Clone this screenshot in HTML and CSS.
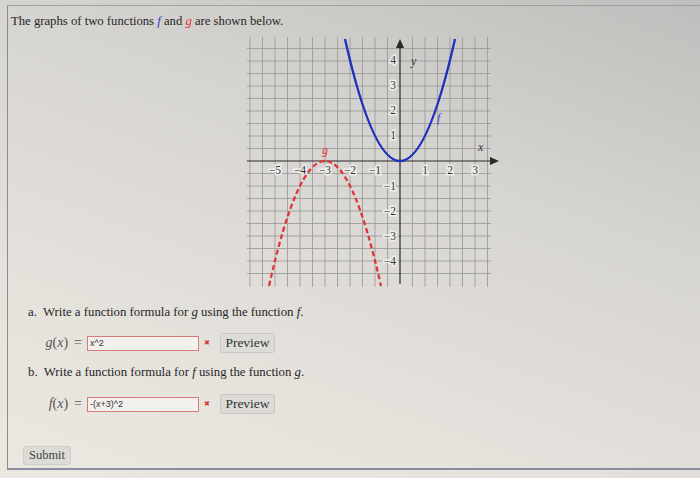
FILE: index.html
```html
<!DOCTYPE html>
<html>
<head>
<meta charset="utf-8">
<link rel="stylesheet" href="styles.css">
</head>
<body>
<div class="frame">
  <p class="intro">The graphs of two functions <i class="mf">f</i> and <i class="mg">g</i> are shown below.</p>
  <div class="graph">
    <svg width="260" height="256" viewBox="0 0 260 256" xmlns="http://www.w3.org/2000/svg">
      <g stroke="#999" stroke-width="0.85">
        <path d="M5 2V252M17.5 2V252M30 2V252M42.5 2V252M55 2V252M67.5 2V252M80 2V252M92.5 2V252M105 2V252M117.5 2V252M130 2V252M142.5 2V252M167.5 2V252M180 2V252M192.5 2V252M205 2V252M217.5 2V252M230 2V252M242.5 2V252"/>
        <path d="M2 13.5H246M2 26H246M2 38.5H246M2 51H246M2 63.5H246M2 76H246M2 88.5H246M2 101H246M2 113.5H246M2 138.5H246M2 151H246M2 163.5H246M2 176H246M2 188.5H246M2 201H246M2 213.5H246M2 226H246M2 238.5H246"/>
      </g>
      <g stroke="#2a2a2a" stroke-width="1.2" fill="#2a2a2a">
        <path d="M2 126H248"/>
        <path d="M155 249V12"/>
        <path d="M254 126L245 122L245 130Z" stroke="none"/>
        <path d="M155 4L151 13L159 13Z" stroke="none"/>
      </g>
      <g font-family="Liberation Serif, serif" font-size="11.5" fill="#333" stroke="#efeeec" stroke-width="3" paint-order="stroke" text-anchor="middle">
        <text x="30" y="139">−5</text>
        <text x="55" y="139">−4</text>
        <text x="80" y="139">−3</text>
        <text x="105" y="139">−2</text>
        <text x="130" y="139">−1</text>
        <text x="180" y="139">1</text>
        <text x="205" y="139">2</text>
        <text x="230" y="139">3</text>
      </g>
      <g font-family="Liberation Serif, serif" font-size="11.5" fill="#333" stroke="#efeeec" stroke-width="3" paint-order="stroke" text-anchor="end">
        <text x="151" y="29">4</text>
        <text x="151" y="54">3</text>
        <text x="151" y="79">2</text>
        <text x="151" y="104">1</text>
        <text x="151" y="155">−1</text>
        <text x="151" y="180">−2</text>
        <text x="151" y="205">−3</text>
        <text x="151" y="230">−4</text>
      </g>
      <path d="M100 4Q155 248 210 4" fill="none" stroke="#1d2fbf" stroke-width="2.3"/>
      <path d="M24 251Q80 1 136 251" fill="none" stroke="#e0333a" stroke-width="2.3" stroke-dasharray="5 3"/>
      <g font-family="Liberation Serif, serif" font-style="italic" font-size="12">
        <text x="166" y="30" fill="#333">y</text>
        <text x="233" y="116" fill="#333">x</text>
        <text x="192" y="87" fill="#3344bb">f</text>
        <text x="77" y="119" fill="#e0333a">g</text>
      </g>
    </svg>
  </div>
  <p class="part part-a">a.&nbsp; Write a function formula for <i>g</i> using the function <i>f</i>.</p>
  <div class="answer row-a">
    <span class="lbl"><i>g</i>(<i>x</i>)<span class="eq">=</span></span>
    <span class="inp">x^2</span>
    <span class="bad">✖</span>
    <span class="btn">Preview</span>
  </div>
  <p class="part part-b">b.&nbsp; Write a function formula for <i>f</i> using the function <i>g</i>.</p>
  <div class="answer row-b">
    <span class="lbl"><i>f</i>(<i>x</i>)<span class="eq">=</span></span>
    <span class="inp">-(x+3)^2</span>
    <span class="bad">✖</span>
    <span class="btn">Preview</span>
  </div>
  <div class="submit-row"><span class="submit">Submit</span></div>
</div>
</body>
</html>
```
FILE: styles.css
```css
html, body {
  margin: 0;
  padding: 0;
  width: 700px;
  height: 478px;
  overflow: hidden;
}
body {
  background: linear-gradient(200deg, #c0bebc 0%, #d6d4d1 35%, #e6e3dd 75%, #ebe8e2 100%);
  font-family: "Liberation Serif", serif;
  color: #262626;
}
.frame {
  margin: 5px 0 0 7px;
  width: 693px;
  height: 465px;
  border-left: 1px solid #8c8c8e;
  border-top: 1px solid #a2a1a0;
  border-bottom: 2px solid #8a8c9c;
  box-sizing: border-box;
  display: flex;
  flex-direction: column;
}
p { margin: 0; }
.intro {
  margin-top: 7px;
  padding-left: 3px;
  font-size: 12.7px;
  line-height: 16px;
}
.mf { color: #2a3cc0; }
.mg { color: #e0333a; }
.graph {
  margin-top: 6px;
  margin-left: 237px;
  height: 256px;
}
.graph svg { display: block; }
.part {
  padding-left: 20px;
  font-size: 12.8px;
  line-height: 16px;
}
.part-a { margin-top: 13px; }
.part-b { margin-top: 11px; }
.answer {
  display: flex;
  align-items: center;
  height: 20px;
}
.row-a { margin-top: 13px; }
.row-b { margin-top: 14px; }
.lbl {
  width: 74px;
  text-align: right;
  font-size: 14px;
  color: #555;
}
.eq {
  margin-left: 6px;
}
.inp {
  margin-left: 5px;
  width: 108px;
  height: 13px;
  border: 1px solid #d77a7a;
  background: #f3f1ee;
  font-family: "Liberation Sans", sans-serif;
  font-size: 9px;
  line-height: 13px;
  padding-left: 2px;
  color: #333;
}
.bad {
  margin-left: 5px;
  width: 7px;
  font-size: 7px;
  color: #d23434;
}
.btn {
  margin-left: 9px;
  width: 55px;
  height: 20px;
  box-sizing: border-box;
  border: 1px solid #c9c7c3;
  border-radius: 3px;
  background: #dddbd7;
  font-size: 13.5px;
  line-height: 18px;
  text-align: center;
  color: #333;
}
.submit-row {
  margin-top: 31px;
  padding-left: 15px;
}
.submit {
  display: inline-block;
  width: 48px;
  height: 19px;
  box-sizing: border-box;
  border: 1px solid #cfcdc9;
  border-radius: 3px;
  background: #dddbd6;
  font-size: 12.5px;
  line-height: 17px;
  text-align: center;
  color: #444;
}
```
